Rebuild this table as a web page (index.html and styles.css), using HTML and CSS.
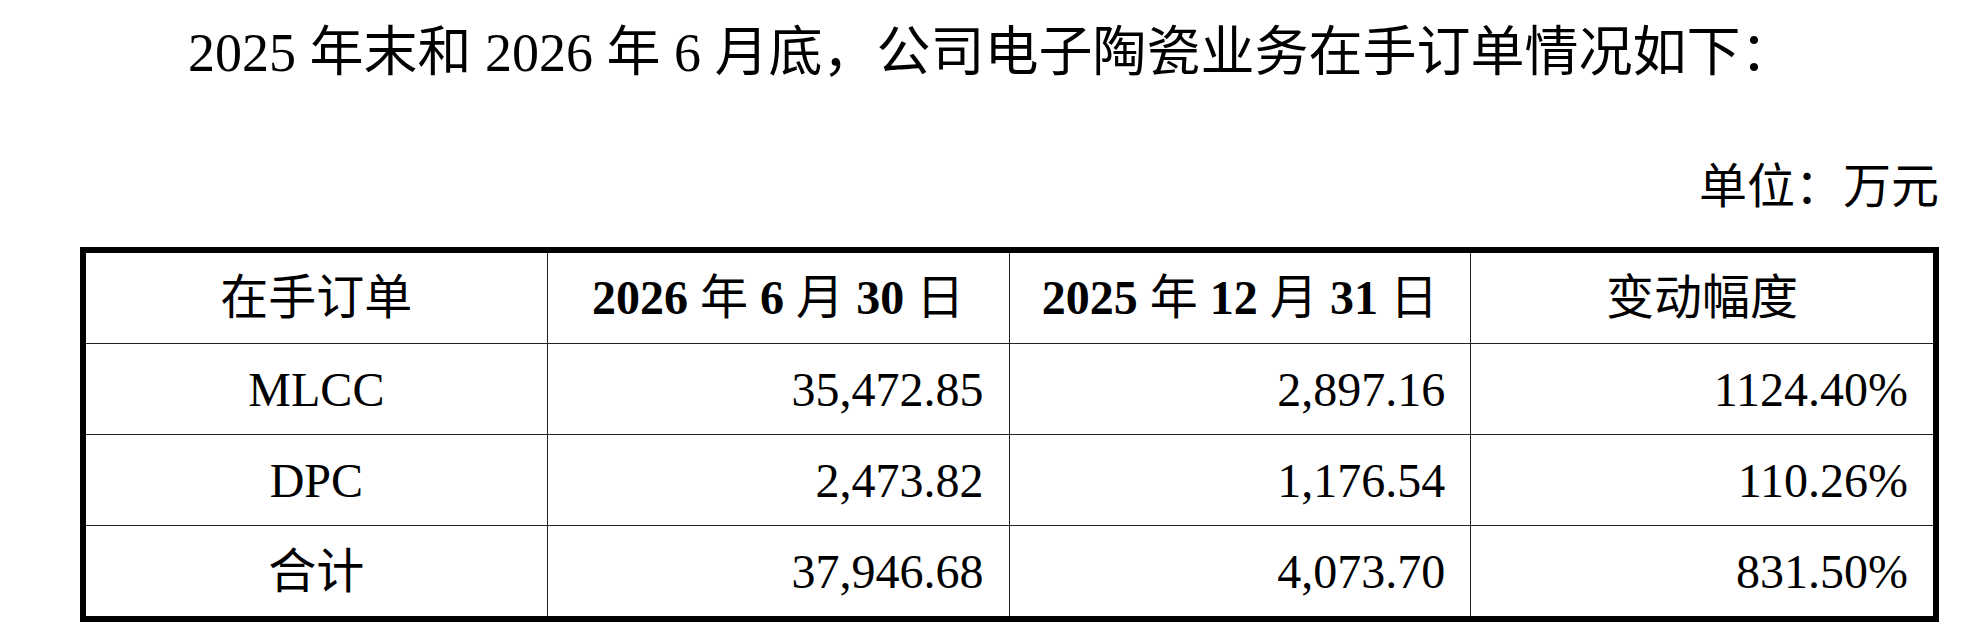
FILE: index.html
```html
<!DOCTYPE html>
<html lang="zh-CN">
<head>
<meta charset="utf-8">
<title>在手订单情况</title>
<link rel="stylesheet" href="styles.css">
</head>
<body>
<div class="page">
  <p class="lead">2025 年末和 2026 年 6 月底，公司电子陶瓷业务在手订单情况如下：</p>
  <p class="unit">单位：万元</p>
  <table class="orders">
    <thead>
      <tr>
        <th>在手订单</th>
        <th><b class="num">2026</b> 年 <b class="num">6</b> 月 <b class="num">30</b> 日</th>
        <th><b class="num">2025</b> 年 <b class="num">12</b> 月 <b class="num">31</b> 日</th>
        <th>变动幅度</th>
      </tr>
    </thead>
    <tbody>
      <tr>
        <td class="name">MLCC</td>
        <td class="val">35,472.85</td>
        <td class="val">2,897.16</td>
        <td class="val">1124.40%</td>
      </tr>
      <tr>
        <td class="name">DPC</td>
        <td class="val">2,473.82</td>
        <td class="val">1,176.54</td>
        <td class="val">110.26%</td>
      </tr>
      <tr>
        <td class="name">合计</td>
        <td class="val">37,946.68</td>
        <td class="val">4,073.70</td>
        <td class="val">831.50%</td>
      </tr>
    </tbody>
  </table>
</div>
</body>
</html>
```

FILE: styles.css
```css
html, body {
  margin: 0;
  padding: 0;
  background: #fff;
}

body {
  font-family: "Liberation Serif", "Noto Sans CJK SC", serif;
  color: #000;
}

.page {
  margin-left: 80px;
  width: 1859px;
  padding-top: 13px;
}

.lead {
  margin: 0;
  font-size: 54px;
  line-height: 80px;
  text-indent: 2em;
  white-space: nowrap;
}

.unit {
  margin: 54px 0 0;
  font-size: 48px;
  line-height: 80px;
  text-align: right;
}

.orders {
  margin-top: 20px;
  width: 1859px;
  table-layout: fixed;
  border-collapse: separate;
  border-spacing: 0;
  border: 6px solid #000;
  font-size: 48px;
  line-height: 1.2;
}

.orders th,
.orders td {
  height: 90px;
  padding: 0;
  border-right: 1px solid #222;
  border-bottom: 1px solid #222;
  vertical-align: middle;
  white-space: nowrap;
  box-sizing: content-box;
}

.orders th {
  font-weight: normal;
  text-align: center;
}

.orders tr > :last-child {
  border-right: none;
}

.orders tbody tr:last-child td {
  border-bottom: none;
}

.orders .num {
  font-weight: bold;
}

.orders .name {
  text-align: center;
  padding-top: 2px;
  height: 88px;
}

.orders .val {
  text-align: right;
  padding-right: 25px;
  padding-top: 2px;
  height: 88px;
}
```
